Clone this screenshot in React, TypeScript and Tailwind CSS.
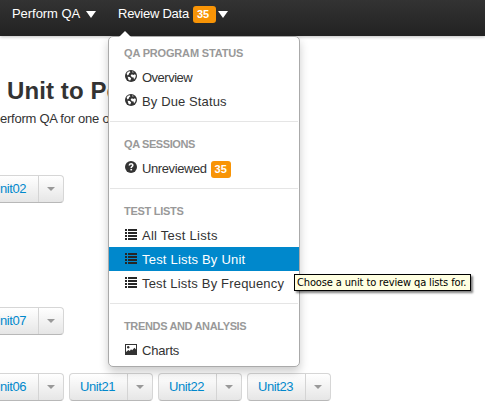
import React from "react";

const body = "font-['Liberation_Sans',Arial,sans-serif]";

function Globe() {
  return (
    <svg width="12" height="12" viewBox="0 0 12 12" className="block">
      <circle cx="6" cy="6" r="6" fill="#333" />
      <path d="M1.6 3.4 3 1.8 4.8 1.3 5.4 2.2 4.2 3.2 3.8 4.6 2.4 5.4z" fill="#fff" />
      <path d="M7 1.3 8.8 2 7.8 2.8z M5.6 5.2 7 4.2 8.2 5 10 4.2 10.9 5.6 10.4 7.6 9 9.6 8.6 7.4 6.8 7.2z M2.6 6.8 4.8 7 6.2 8.6 5.2 10.6 3.6 10z" fill="#fff" />
    </svg>
  );
}

function Question() {
  return (
    <svg width="12" height="12" viewBox="0 0 12 12" className="block">
      <circle cx="6" cy="6" r="6" fill="#333" />
      <path d="M4.3 4.5C4.3 2.3 7.8 2.3 7.8 4.3 7.8 5.4 6.2 5.6 6.2 7" fill="none" stroke="#fff" strokeWidth="1.6" />
      <path d="M5.4 7.9h1.7v1.5H5.4z" fill="#fff" />
    </svg>
  );
}

function List() {
  return (
    <svg width="12" height="11" viewBox="0 0 12 11" shapeRendering="crispEdges" className="block">
      <path d="M0 0h2v2H0z M3 0h9v2H3z M0 3h2v2H0z M3 3h9v2H3z M0 6h2v2H0z M3 6h9v2H3z M0 9h2v2H0z M3 9h9v2H3z" fill="#262626" />
    </svg>
  );
}

function Picture() {
  return (
    <svg width="12" height="11" viewBox="0 0 12 11" className="block">
      <path d="M0 0h12v11H0z" fill="#333" />
      <path d="M1 1h10v4.4L9.4 3.7 7.2 6.2 6 5.2 4.8 7 3.4 6 1 8z" fill="#fff" />
      <circle cx="3.2" cy="3.2" r="1.2" fill="#333" />
    </svg>
  );
}

function Badge() {
  return (
    <span className="flex h-[17px] w-5 shrink-0 items-center justify-center rounded-[3px] bg-[#f89406] text-[11px] leading-[17px] font-bold text-white">
      35
    </span>
  );
}

function Header({ children, spacing }: { children: string; spacing: string }) {
  return (
    <div className={`h-6 pl-[15px] text-[11px] leading-6 font-bold whitespace-nowrap text-[#999] ${spacing}`}>{children}</div>
  );
}

function Item({ icon, label, spacing, active, badge }: { icon: React.ReactNode; label: string; spacing: string; active?: boolean; badge?: boolean }) {
  return (
    <div className={`flex h-6 items-center pl-4 text-[13px] leading-[22px] ${active ? "bg-[#0088cc] text-white" : "text-[#333]"}`}>
      <span className="mr-[5px] w-3 shrink-0 -translate-y-px">{icon}</span>
      <span className={`pt-[2px] whitespace-nowrap ${spacing}`}>{label}</span>
      {badge && <span className="ml-[4px] pt-[2px]"><Badge /></span>}
    </div>
  );
}

function Divider() {
  return <div className="mx-px mt-2 mb-[10px] h-px bg-[#e5e5e5]" />;
}

function UnitButton({ label }: { label: string }) {
  return (
    <div className="flex h-7 w-[84px] shrink-0 overflow-hidden rounded-[4px] border border-[#d6d6d6] border-b-[#b8b8b8] bg-linear-to-b from-white to-[#e6e6e6]">
      <span className="w-[57px] pl-[10px] text-[13px] leading-[26px] tracking-[-0.4px] text-[#0088cc]">{label}</span>
      <span className="flex flex-1 items-center justify-center border-l border-[#d4d4d4]">
        <svg width="8" height="4" viewBox="0 0 8 4" className="block"><path d="M0 0h8L4 4z" fill="#999" /></svg>
      </span>
    </div>
  );
}

function Caret() {
  return (
    <svg width="10" height="7" viewBox="0 0 10 7" className="block"><path d="M0 0h10L5 7z" fill="#fff" /></svg>
  );
}

export default function App() {
  return (
    <div className={`relative h-[412px] w-[485px] overflow-hidden bg-white text-[#333] ${body}`}>
      <nav className="relative flex h-9 items-start bg-linear-to-b from-[#333] to-[#222] pt-[3px] pl-3 text-[13px] leading-[22px] text-white shadow-[0_1px_3px_rgba(0,0,0,0.25)]">
        <div className="flex w-[106px] items-center">
          <span className="w-[74px] whitespace-nowrap tracking-[-0.05px]">Perform QA</span>
          <Caret />
        </div>
        <div className="flex items-center">
          <span className="w-[75px] whitespace-nowrap tracking-[-0.25px]">Review Data</span>
          <span className="flex h-[17px] w-[23px] items-center rounded-[3px] bg-[#f89406] pl-1 text-[11px] font-bold">35</span>
          <span className="ml-[2px]"><Caret /></span>
        </div>
      </nav>

      <main>
        <h1 className="mt-[40px] h-[30px] pl-[7px] text-[24px] leading-[30px] font-bold tracking-[0.1px] whitespace-nowrap">Unit to Perform</h1>
        <p className="-ml-[7px] mt-[4px] h-[18px] text-[13px] leading-[18px] tracking-[-0.25px] whitespace-nowrap">perform QA for one or</p>
        <div className="-ml-5 mt-[47px] flex"><UnitButton label="Unit02" /></div>
        <div className="-ml-5 mt-[104px] flex"><UnitButton label="Unit07" /></div>
        <div className="-ml-5 mt-[38px] flex gap-[5px]">
          <UnitButton label="Unit06" />
          <UnitButton label="Unit21" />
          <UnitButton label="Unit22" />
          <UnitButton label="Unit23" />
        </div>
      </main>

      <div className="absolute top-9 left-[108px] h-[331px] w-[192px] rounded-[5px] border border-[#aaa] bg-white pt-1 shadow-[0_5px_10px_rgba(0,0,0,0.2)]">
        <svg width="12" height="6" viewBox="0 0 12 6" className="absolute -top-[6px] left-[10px]"><path d="M0 6 6 0 12 6z" fill="#fff" /></svg>
        <Header spacing="tracking-[-0.17px]">QA PROGRAM STATUS</Header>
        <Item icon={<Globe />} label="Overview" spacing="tracking-[-0.5px]" />
        <Item icon={<Globe />} label="By Due Status" spacing="tracking-[0.12px]" />
        <Divider />
        <Header spacing="tracking-[-0.4px]">QA SESSIONS</Header>
        <Item icon={<Question />} label="Unreviewed" spacing="tracking-[-0.4px]" badge />
        <Divider />
        <Header spacing="tracking-[-0.28px]">TEST LISTS</Header>
        <Item icon={<List />} label="All Test Lists" spacing="tracking-[0.26px]" />
        <Item icon={<List />} label="Test Lists By Unit" spacing="tracking-[0.2px]" active />
        <Item icon={<List />} label="Test Lists By Frequency" spacing="tracking-[0.18px]" />
        <Divider />
        <Header spacing="tracking-[-0.35px]">TRENDS AND ANALYSIS</Header>
        <Item icon={<Picture />} label="Charts" spacing="tracking-[-0.2px]" />
      </div>

      <div className="absolute top-[274px] left-[294px] h-[17px] w-[177px] border border-black bg-[#ffffe1] pl-[2px] font-['DejaVu_Sans_Condensed','DejaVu_Sans',sans-serif] text-[11px] leading-[15px] whitespace-nowrap text-black shadow-[2px_2px_2px_rgba(0,0,0,0.5)]">
        <span className="tracking-[-0.13px]">Choose a unit to review qa lists for.</span>
      </div>
    </div>
  );
}
